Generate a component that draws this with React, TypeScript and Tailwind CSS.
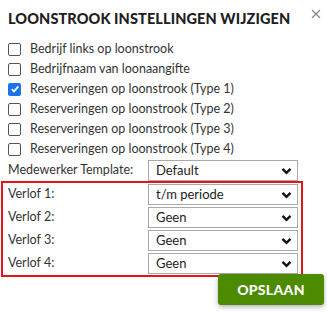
import React, { useState } from 'react';

const checks = [
  { label: 'Bedrijf links op loonstrook', checked: false },
  { label: 'Bedrijfnaam van loonaangifte', checked: false },
  { label: 'Reserveringen op loonstrook (Type 1)', checked: true },
  { label: 'Reserveringen op loonstrook (Type 2)', checked: false },
  { label: 'Reserveringen op loonstrook (Type 3)', checked: false },
  { label: 'Reserveringen op loonstrook (Type 4)', checked: false },
];

const verlof = [
  { label: 'Verlof 1:', value: 't/m periode' },
  { label: 'Verlof 2:', value: 'Geen' },
  { label: 'Verlof 3:', value: 'Geen' },
  { label: 'Verlof 4:', value: 'Geen' },
];

function Chevron() {
  return (
    <svg width="11" height="8" viewBox="0 0 11 8" className="shrink-0">
      <path d="M1.5 1.8 L5.5 5.8 L9.5 1.8" fill="none" stroke="#111" strokeWidth="2.4" />
    </svg>
  );
}

function SelectBox({ value }: { value: string }) {
  return (
    <div className="w-[150px] h-[21px] border border-[#a9a9a9] bg-white flex items-center justify-between pl-[7px] pr-[5px] text-[13px] text-[#222]">
      <span>{value}</span>
      <Chevron />
    </div>
  );
}

function CheckBox({ checked }: { checked: boolean }) {
  if (checked) {
    return (
      <div className="w-[13px] h-[13px] rounded-[2px] bg-[#1a73e8] flex items-center justify-center shrink-0">
        <svg width="10" height="10" viewBox="0 0 10 10">
          <path d="M1.8 5.2 L4 7.4 L8.4 2.4" fill="none" stroke="#fff" strokeWidth="1.8" />
        </svg>
      </div>
    );
  }
  return <div className="w-[13px] h-[13px] rounded-[2px] border border-[#555] bg-white shrink-0" />;
}

export default function App() {
  const [items] = useState(checks);

  return (
    <div className="w-[327px] h-[312px] bg-white relative text-[#333] overflow-hidden" style={{ fontFamily: 'Lato, "Noto Sans", sans-serif' }}>
      <div className="pl-[8px] pt-[9px]">
        <h2 className="text-[14.5px] font-black tracking-[0.1px] text-[#1e1e1e] leading-[20px] whitespace-nowrap">
          LOONSTROOK INSTELLINGEN WIJZIGEN
        </h2>
      </div>
      <svg className="absolute left-[311px] top-[9px]" width="10" height="10" viewBox="0 0 10 10">
        <path d="M1 1 L9 9 M9 1 L1 9" stroke="#8a8a8a" strokeWidth="1.3" />
      </svg>

      <div className="mt-[10px] pl-[8px] flex flex-col">
        {items.map((c) => (
          <label key={c.label} className="h-[20px] flex items-center gap-[9px] text-[12.5px] whitespace-nowrap">
            <CheckBox checked={c.checked} />
            <span>{c.label}</span>
          </label>
        ))}
      </div>

      <div className="mt-[1px] pl-[8px] flex items-center h-[21px] text-[12.5px]">
        <span className="w-[140px] whitespace-nowrap">Medewerker Template:</span>
        <SelectBox value="Default" />
      </div>

      <div className="ml-[1px] w-[302px] border-2 border-[#e4141b] pl-[5px] pt-[1px] pb-[1px] flex flex-col gap-[2px]">
        {verlof.map((v) => (
          <div key={v.label} className="flex items-center h-[21px] text-[12.5px]">
            <span className="w-[140px]">{v.label}</span>
            <SelectBox value={v.value} />
          </div>
        ))}
      </div>

      <div className="flex justify-end pr-[3px] mt-[-3px]">
        <button className="w-[106px] h-[31px] rounded-[3px] bg-[#4c8a00] text-white font-black text-[14px] tracking-[0.3px] shadow-[0_2px_5px_rgba(0,0,0,0.3)]">
          OPSLAAN
        </button>
      </div>
    </div>
  );
}
